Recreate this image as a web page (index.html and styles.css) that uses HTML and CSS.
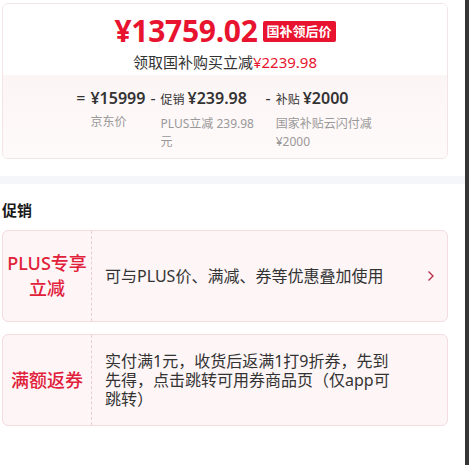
FILE: index.html
```html
<!DOCTYPE html>
<html lang="zh-CN">
<head>
<meta charset="utf-8">
<title>促销</title>
<link rel="stylesheet" href="styles.css">
</head>
<body>
<div class="page">
  <main class="content">
    <section class="top">
      <div class="price-card">
        <div class="price-head">
          <div class="price-row">
            <span class="price">¥13759.02</span>
            <span class="badge">国补领后价</span>
          </div>
          <div class="subtitle">领取国补购买立减<span class="red">¥2239.98</span></div>
        </div>
        <div class="price-break">
          <span class="op">=</span>
          <div class="col col1">
            <div class="val">¥15999</div>
            <div class="desc">京东价</div>
          </div>
          <span class="op">-</span>
          <div class="col col2">
            <div class="val"><span class="tag">促销</span>¥239.98</div>
            <div class="desc">PLUS立减 239.98元</div>
          </div>
          <span class="op">-</span>
          <div class="col col3">
            <div class="val"><span class="tag">补贴</span>¥2000</div>
            <div class="desc">国家补贴云闪付减¥2000</div>
          </div>
        </div>
      </div>
    </section>
    <div class="band"></div>
    <section class="promo">
      <h2 class="promo-title">促销</h2>
      <div class="promo-card">
        <div class="promo-label">PLUS专享<br>立减</div>
        <div class="promo-text">可与PLUS价、满减、券等优惠叠加使用</div>
        <div class="chev">
          <svg width="8" height="12" viewBox="0 0 8 12"><path d="M1.5 1.5 L6 6 L1.5 10.5" fill="none" stroke="#b5324c" stroke-width="1.4"/></svg>
        </div>
      </div>
      <div class="promo-card">
        <div class="promo-label">满额返券</div>
        <div class="promo-text wrap">实付满1元，收货后返满1打9折券，先到先得，点击跳转可用券商品页（仅app可跳转）</div>
      </div>
    </section>
  </main>
  <div class="scrollbar"></div>
</div>
</body>
</html>
```
FILE: styles.css
```css
html, body {
  margin: 0;
  padding: 0;
  background: #fff;
}
body {
  font-family: "Noto Sans", "Noto Sans CJK SC", sans-serif;
  color: #333;
}
.page {
  display: flex;
  height: 465px;
  overflow: hidden;
}
.content {
  width: 465px;
}
.scrollbar {
  width: 4px;
  background: #363636;
}
.top {
  padding: 3px 17px 0 2px;
}
.price-card {
  border: 1px solid #f2e4e7;
  border-radius: 6px;
  overflow: hidden;
}
.price-head {
  height: 71px;
  background: #fff;
  display: flex;
  flex-direction: column;
  align-items: center;
}
.price-row {
  display: flex;
  align-items: center;
  gap: 5px;
  margin-top: 9px;
  height: 36px;
}
.price {
  font-size: 30px;
  line-height: 36px;
  font-weight: 700;
  color: #e8132f;
  letter-spacing: -0.3px;
}
.badge {
  background: #e8132f;
  color: #fff;
  font-size: 13px;
  font-weight: 700;
  line-height: 21px;
  padding: 0 4px;
  border-radius: 2px;
}
.subtitle {
  font-size: 15px;
  line-height: 20px;
  margin-top: 3px;
  color: #333;
}
.red {
  color: #e8132f;
}
.price-break {
  height: 83px;
  box-sizing: border-box;
  background: linear-gradient(#fcf5f5, #fffafa);
  display: flex;
  justify-content: center;
  align-items: flex-start;
  padding-top: 12px;
  padding-right: 5px;
}
.op {
  font-size: 16px;
  line-height: 22px;
  color: #333;
  margin: 0 5px;
}
.col .val {
  font-size: 16px;
  font-weight: 600;
  line-height: 22px;
  color: #333;
  white-space: nowrap;
}
.tag {
  font-size: 12px;
  font-weight: 400;
  margin-right: 3px;
}
.col .desc {
  font-size: 12px;
  line-height: 18px;
  color: #999;
  margin-top: 4px;
}
.col2 {
  width: 100px;
}
.col3 {
  width: 98px;
}
.band {
  height: 8px;
  margin-top: 17px;
  background: #f5f6f9;
}
.promo {
  padding: 0 17px 0 2px;
}
.promo-title {
  margin: 16px 0 10px;
  font-size: 15px;
  line-height: 20px;
  font-weight: 700;
  color: #1a1a1a;
}
.promo-card {
  display: flex;
  align-items: stretch;
  height: 92px;
  box-sizing: border-box;
  border: 1px solid #f5dde1;
  border-radius: 6px;
  background: #fdf5f6;
  margin-bottom: 12px;
}
.promo-label {
  width: 88px;
  flex: none;
  border-right: 1px dashed #e9cdd2;
  display: flex;
  align-items: center;
  justify-content: center;
  text-align: center;
  font-size: 18px;
  line-height: 25px;
  font-weight: 500;
  color: #e1203a;
}
.promo-text {
  flex: 1;
  display: flex;
  align-items: center;
  padding-left: 13px;
  font-size: 16px;
  line-height: 19px;
  color: #333;
}
.promo-text.wrap {
  flex: none;
  width: 290px;
}
.chev {
  display: flex;
  align-items: center;
  padding: 0 12px 0 10px;
}
```
